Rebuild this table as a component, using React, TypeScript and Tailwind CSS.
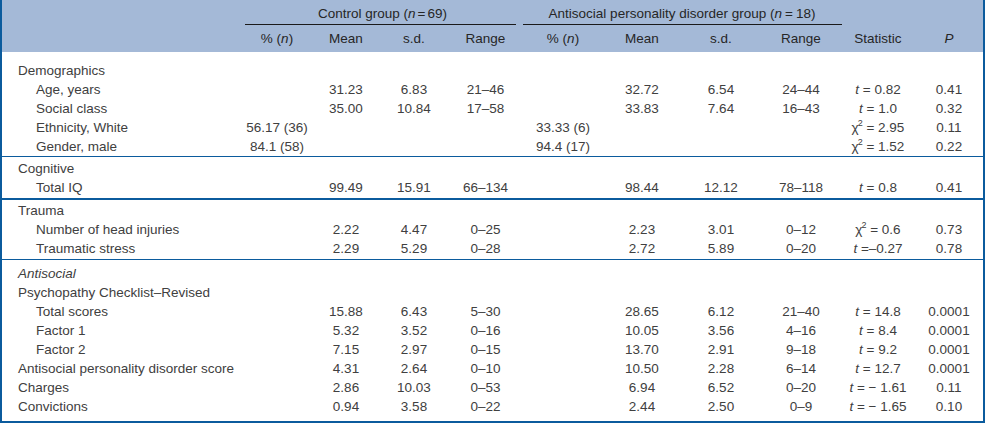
import React from "react";

type Cell = React.ReactNode;

const T = () => <span className="italic">t</span>;
const Chi = () => (
  <span>
    χ<span className="relative top-[-6px] text-[9px] leading-none ml-[-1px]">2</span>
  </span>
);

const grid =
  "grid grid-cols-[240px_70px_68px_68px_75px_80px_78px_80px_80px_74px_68px]";

function Row({
  label,
  indent = false,
  italic = false,
  cells = [],
}: {
  label: React.ReactNode;
  indent?: boolean;
  italic?: boolean;
  cells?: Cell[];
}) {
  const all: Cell[] = Array.from({ length: 10 }, (_, i) => cells[i] ?? "");
  return (
    <div className={`${grid} h-[19px] items-center`}>
      <div className={`${indent ? "pl-[34px]" : "pl-[16px]"} ${italic ? "italic" : ""} whitespace-nowrap`}>
        {label}
      </div>
      {all.map((c, i) => (
        <div key={i} className="text-center whitespace-nowrap">
          {c}
        </div>
      ))}
    </div>
  );
}

export default function App() {
  return (
    <div className="w-[985px] h-[423px] bg-white font-['Liberation_Sans',Arial,sans-serif] text-[13.5px] leading-[19px] text-[#404040] border-l-2 border-r-2 border-b-2 border-[#0b5b9d]">
      {/* Header */}
      <div className="bg-[#a4b9d7] h-[52px] text-[#262626]">
        <div className={`${grid} h-[25px]`}>
          <div />
          <div className="col-span-4 flex flex-col">
            <div className="h-[24px] flex items-center justify-center pt-[2px]">
              Control group (<span className="italic">n</span>
              <span className="mx-[2px]">=</span>69)
            </div>
            <div className="h-px bg-[#1a1a1a] ml-[3px] mr-[7px]" />
          </div>
          <div className="col-span-4 flex flex-col">
            <div className="h-[24px] flex items-center justify-center pt-[2px]">
              Antisocial personality disorder group (<span className="italic">n</span>
              <span className="mx-[3px]">=</span>18)
            </div>
            <div className="h-px bg-[#1a1a1a] mr-[-1px]" />
          </div>
          <div />
          <div />
        </div>
        <div className={`${grid} h-[27px] items-center`}>
          <div />
          <div className="text-center">
            % (<span className="italic">n</span>)
          </div>
          <div className="text-center">Mean</div>
          <div className="text-center">s.d.</div>
          <div className="text-center">Range</div>
          <div className="text-center">
            % (<span className="italic">n</span>)
          </div>
          <div className="text-center">Mean</div>
          <div className="text-center">s.d.</div>
          <div className="text-center">Range</div>
          <div className="text-center">Statistic</div>
          <div className="text-center italic">P</div>
        </div>
      </div>

      {/* Demographics */}
      <div className="pt-[9px] border-b border-[#0b5b9d]">
        <Row label="Demographics" />
        <Row
          label="Age, years"
          indent
          cells={["", "31.23", "6.83", "21–46", "", "32.72", "6.54", "24–44", <><T /> = 0.82</>, "0.41"]}
        />
        <Row
          label="Social class"
          indent
          cells={["", "35.00", "10.84", "17–58", "", "33.83", "7.64", "16–43", <><T /> = 1.0</>, "0.32"]}
        />
        <Row
          label="Ethnicity, White"
          indent
          cells={["56.17 (36)", "", "", "", "33.33 (6)", "", "", "", <><Chi /> = 2.95</>, "0.11"]}
        />
        <Row
          label="Gender, male"
          indent
          cells={["84.1 (58)", "", "", "", "94.4 (17)", "", "", "", <><Chi /> = 1.52</>, "0.22"]}
        />
      </div>

      {/* Cognitive */}
      <div className="pt-[2px] pb-[1px] border-b-2 border-[#0b5b9d]">
        <Row label="Cognitive" />
        <Row
          label="Total IQ"
          indent
          cells={["", "99.49", "15.91", "66–134", "", "98.44", "12.12", "78–118", <><T /> = 0.8</>, "0.41"]}
        />
      </div>

      {/* Trauma */}
      <div className="pt-[1px] pb-[1px] border-b border-[#0b5b9d]">
        <Row label="Trauma" />
        <Row
          label="Number of head injuries"
          indent
          cells={["", "2.22", "4.47", "0–25", "", "2.23", "3.01", "0–12", <><Chi /> = 0.6</>, "0.73"]}
        />
        <Row
          label="Traumatic stress"
          indent
          cells={["", "2.29", "5.29", "0–28", "", "2.72", "5.89", "0–20", <><T /> =–0.27</>, "0.78"]}
        />
      </div>

      {/* Antisocial */}
      <div className="pt-[4px]">
        <Row label="Antisocial" italic />
        <Row label="Psychopathy Checklist–Revised" />
        <Row
          label="Total scores"
          indent
          cells={["", "15.88", "6.43", "5–30", "", "28.65", "6.12", "21–40", <><T /> = 14.8</>, "0.0001"]}
        />
        <Row
          label="Factor 1"
          indent
          cells={["", "5.32", "3.52", "0–16", "", "10.05", "3.56", "4–16", <><T /> = 8.4</>, "0.0001"]}
        />
        <Row
          label="Factor 2"
          indent
          cells={["", "7.15", "2.97", "0–15", "", "13.70", "2.91", "9–18", <><T /> = 9.2</>, "0.0001"]}
        />
        <Row
          label="Antisocial personality disorder score"
          cells={["", "4.31", "2.64", "0–10", "", "10.50", "2.28", "6–14", <><T /> = 12.7</>, "0.0001"]}
        />
        <Row
          label="Charges"
          cells={["", "2.86", "10.03", "0–53", "", "6.94", "6.52", "0–20", <><T /> = − 1.61</>, "0.11"]}
        />
        <Row
          label="Convictions"
          cells={["", "0.94", "3.58", "0–22", "", "2.44", "2.50", "0–9", <><T /> = − 1.65</>, "0.10"]}
        />
      </div>
    </div>
  );
}
